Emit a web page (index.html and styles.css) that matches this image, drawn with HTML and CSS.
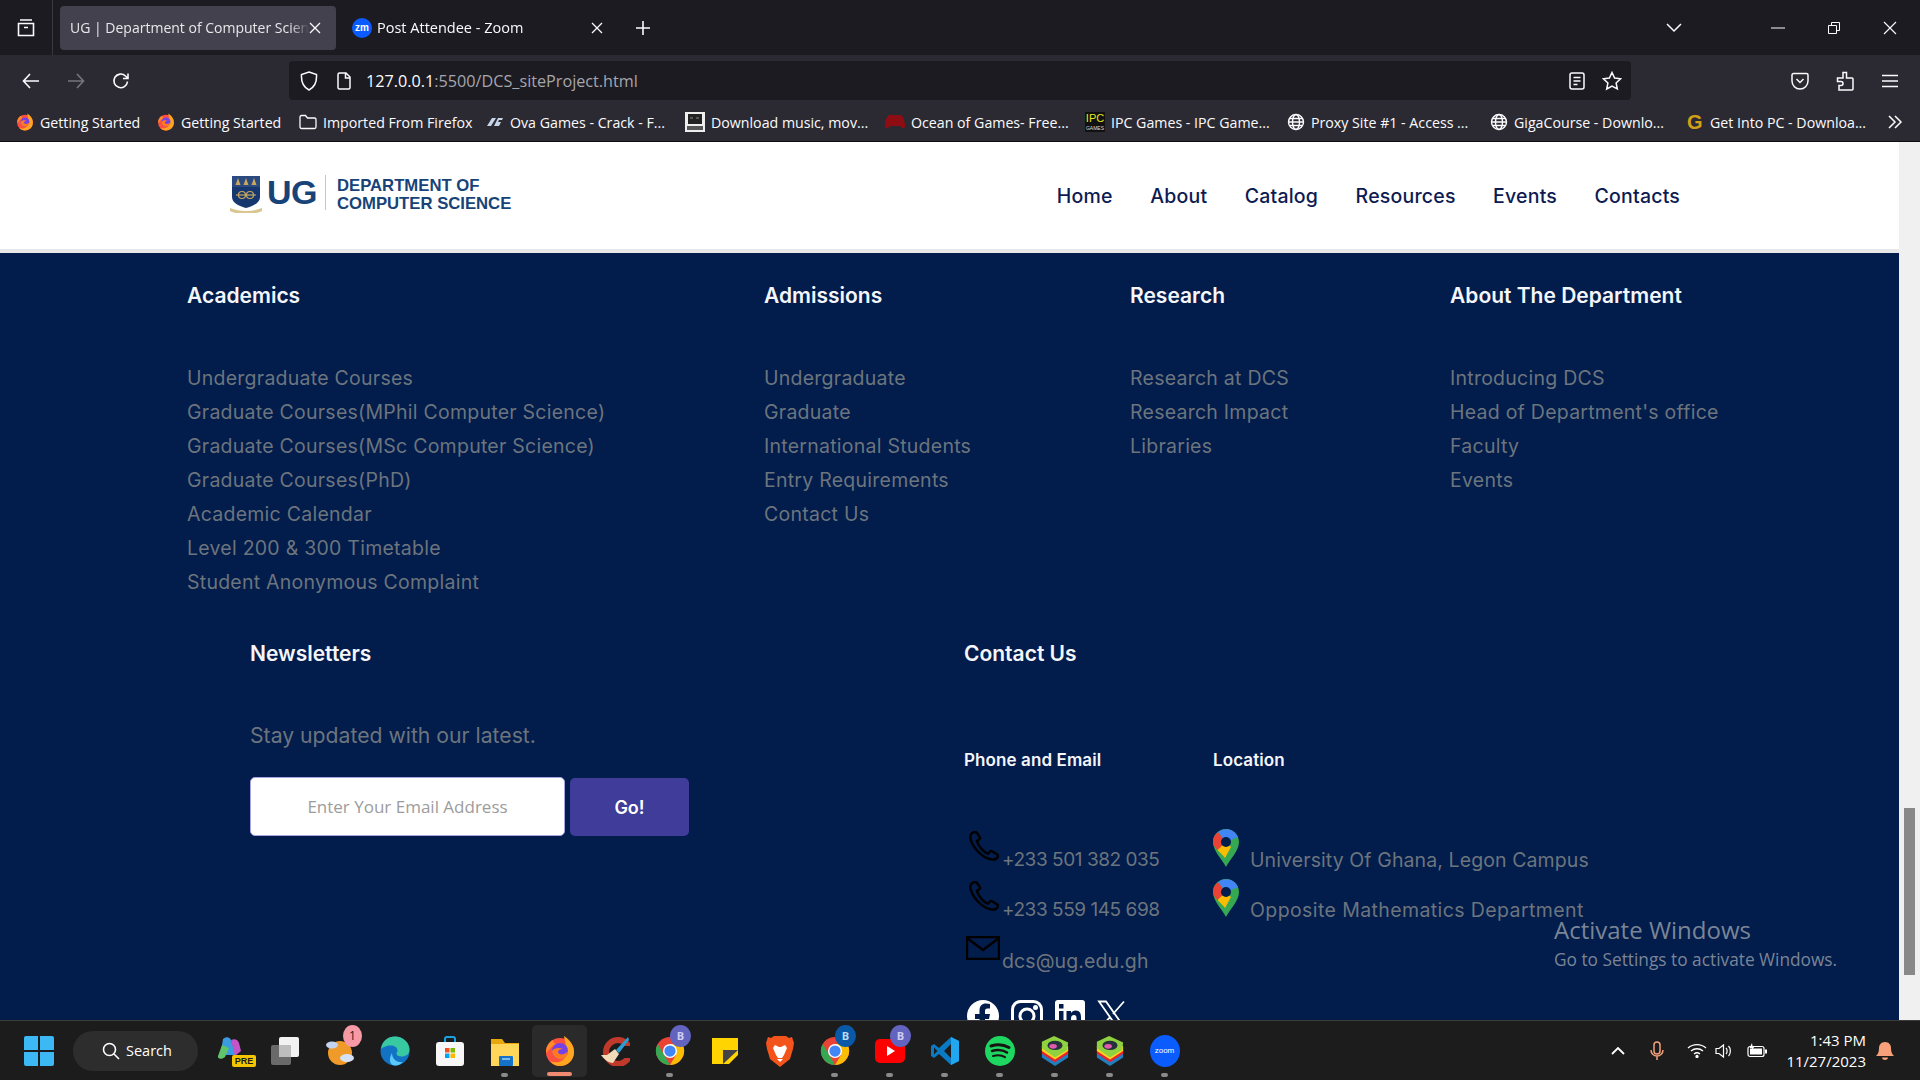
FILE: index.html
```html
<!DOCTYPE html>
<html>
<head>
  <meta charset="UTF-8">
  <title>UG | Department of Computer Science</title>
  <link rel="stylesheet" href="styles.css">
</head>
<body>
  <svg class="defs" width="0" height="0">
    <defs>
      <symbol id="firefox" viewBox="0 0 32 32">
        <circle cx="16" cy="17" r="14" fill="#ff4f3f"/>
        <path d="M20 1c6 4 10 9 10 16 0 8-6 14-14 14-4 0-8-2-10-5 6 3 14 1 16-6 2-6-1-11-2-19z" fill="#ffa51f"/>
        <path d="M2 18C2 11 5 7 9 5c0 2 1 3 3 4-4 2-6 5-10 9z" fill="#ff8a2a"/>
        <circle cx="16" cy="16" r="8" fill="#7542e5"/>
        <path d="M8 16c2-3 7-4 11-2-3 0-5 1-5 3s3 3 6 2c3-1 4-3 4-3 0 5-4 9-9 8-4-1-7-4-7-8z" fill="#ff7a1f"/>
      </symbol>
      <symbol id="globe" viewBox="0 0 18 18">
        <g fill="none" stroke="#fbfbfe" stroke-width="1.400">
          <circle cx="9" cy="9" r="7.500"/>
          <ellipse cx="9" cy="9" rx="3.500" ry="7.500"/>
          <path d="M1.500 9h15M2.500 5.500h13M2.500 12.500h13"/>
        </g>
      </symbol>
      <symbol id="chrome" viewBox="0 0 32 32">
        <circle cx="16" cy="16" r="15" fill="#ea4335"/>
        <path d="M16 31A15 15 0 0 1 3 8.500L9.500 20z" fill="#34a853"/>
        <path d="M16 31a15 15 0 0 0 13-22.500H16l6.500 11.500z" fill="#fbbc04"/>
        <circle cx="16" cy="16" r="7.500" fill="#fff"/>
        <circle cx="16" cy="16" r="6" fill="#4285f4"/>
      </symbol>
      <symbol id="stacks" viewBox="0 0 32 32">
        <path d="M16 10 30 18v5L16 32 2 23v-5z" fill="#1f7fbf"/>
        <path d="M16 7 30 15v4L16 28 2 19v-4z" fill="#e8222f"/>
        <path d="M16 4 30 11v5L16 25 2 16v-5z" fill="#ffd21f"/>
        <path d="M15 0 30 7l-1 8-13 8L2 13V6z" fill="#8fd13f"/>
        <ellipse cx="16" cy="10" rx="8" ry="5" fill="#27313a"/>
        <ellipse cx="14" cy="11" rx="4" ry="2.500" fill="#e05bb0"/>
      </symbol>
      <symbol id="phone" viewBox="0 0 30 30">
        <path d="M4 1.500c-2 1-3 3-2.500 6C3 15 12 27 23 28.500c3 .5 5-1 6-3 .3-1 0-1.500-1-2.200l-5-3c-1-.5-1.700-.3-2.300.4l-1.700 2c-4-1-10-8-11-13l2.300-1.500c.8-.6 1-1.300.6-2.200L8 2c-.7-1-2.500-1.200-4-.5z" fill="none" stroke="#000" stroke-width="2.400"/>
      </symbol>
      <symbol id="mappin" viewBox="0 0 26 38">
        <path d="M13 38C9 30 0 22 0 13A13 13 0 0 1 13 0c7 0 13 6 13 13 0 9-9 17-13 25z" fill="#34a853"/>
        <path d="M1 8A13 13 0 0 1 5 3l8 10-8 9c-3-4-5-6-5-9 0-2 .4-4 1-5z" fill="#ea4335"/>
        <path d="M5 3a13 13 0 0 1 20 5L13 13z" fill="#4285f4"/>
        <path d="M4.500 21 13 13l5 5-6 11c-2-3-5-5-7.500-8z" fill="#fbbc04"/>
        <circle cx="13" cy="13" r="5" fill="#021c4c"/>
      </symbol>
    </defs>
  </svg>

  <div class="tabbar">
    <div class="view-btn">
      <svg width="20" height="20" viewBox="0 0 20 20" fill="none" stroke="#fbfbfe" stroke-width="1.600"><path d="M4 2h12M2.500 5.500h15v12h-15zM8 9.500h4"/></svg>
    </div>
    <div class="tab tab-active">
      <span class="tab-title">UG | Department of Computer Scien</span>
      <svg class="tab-x" width="12" height="12" viewBox="0 0 12 12" stroke="#fbfbfe" stroke-width="1.300"><path d="M1 1l10 10M11 1L1 11"/></svg>
    </div>
    <div class="tab">
      <span class="zm-fav">zm</span>
      <span class="tab-title">Post Attendee - Zoom</span>
      <svg class="tab-x" width="12" height="12" viewBox="0 0 12 12" stroke="#fbfbfe" stroke-width="1.300"><path d="M1 1l10 10M11 1L1 11"/></svg>
    </div>
    <div class="new-tab">
      <svg width="16" height="16" viewBox="0 0 16 16" stroke="#fbfbfe" stroke-width="1.600"><path d="M8 1v14M1 8h14"/></svg>
    </div>
    <div class="tab-list">
      <svg width="16" height="10" viewBox="0 0 16 10" fill="none" stroke="#fbfbfe" stroke-width="1.500"><path d="M1 1l7 7 7-7"/></svg>
    </div>
    <div class="win-btn"><svg width="14" height="2" viewBox="0 0 14 2" stroke="#fbfbfe"><path d="M0 1h14"/></svg></div>
    <div class="win-btn"><svg width="12" height="12" viewBox="0 0 12 12" fill="none" stroke="#fbfbfe"><path d="M.5 3.500h8v8h-8zM3.500 3.500v-3h8v8h-3"/></svg></div>
    <div class="win-btn"><svg width="14" height="14" viewBox="0 0 14 14" stroke="#fbfbfe" stroke-width="1.100"><path d="M1 1l12 12M13 1L1 13"/></svg></div>
  </div>

  <div class="toolbar">
    <div class="tool-btn"><svg width="18" height="16" viewBox="0 0 18 16" fill="none" stroke="#fbfbfe" stroke-width="1.600"><path d="M17 8H2M8 1L1.500 8 8 15"/></svg></div>
    <div class="tool-btn"><svg width="18" height="16" viewBox="0 0 18 16" fill="none" stroke="#77767d" stroke-width="1.600"><path d="M1 8h15M10 1l6.500 7-6.500 7"/></svg></div>
    <div class="tool-btn"><svg width="18" height="18" viewBox="0 0 18 18" fill="none" stroke="#fbfbfe" stroke-width="1.600"><path d="M15.500 9.500A6.800 6.800 0 1 1 13.500 4L16 6.500M16 1.500v5h-5"/></svg></div>
    <div class="urlbar">
      <svg class="url-shield" width="18" height="20" viewBox="0 0 18 20" fill="none" stroke="#fbfbfe" stroke-width="1.500"><path d="M9 1l7.500 2.500C17 11 14 16.500 9 19 4 16.500 1 11 1.500 3.500z"/></svg>
      <svg class="url-page" width="14" height="18" viewBox="0 0 14 18" fill="none" stroke="#fbfbfe" stroke-width="1.500"><path d="M2.500 1H9l4 4v10.500a1.500 1.500 0 0 1-1.500 1.500h-9A1.500 1.500 0 0 1 1 15.500v-13A1.500 1.500 0 0 1 2.500 1zM8.500 1v5h4.500"/></svg>
      <span class="url-text"><span class="url-host">127.0.0.1</span>:5500/DCS_siteProject.html</span>
      <svg class="url-reader" width="16" height="18" viewBox="0 0 16 18" fill="none" stroke="#fbfbfe" stroke-width="1.500"><rect x="1" y="1" width="14" height="16" rx="2"/><path d="M4.500 5.500h7M4.500 9h7M4.500 12.500h4"/></svg>
      <svg class="url-star" width="20" height="20" viewBox="0 0 20 20" fill="none" stroke="#fbfbfe" stroke-width="1.500"><path d="M10 1.500l2.600 5.600 6 .7-4.500 4.100 1.200 6L10 15l-5.300 3 1.200-6L1.400 7.800l6-.7z"/></svg>
    </div>
    <div class="tool-right">
      <div class="tool-btn"><svg width="18" height="18" viewBox="0 0 18 18" fill="none" stroke="#fbfbfe" stroke-width="1.500"><path d="M2.500 1.500h13A1.500 1.500 0 0 1 17 3v6A8 8 0 0 1 1 9V3a1.500 1.500 0 0 1 1.500-1.500zM5.500 7L9 10.500 12.500 7"/></svg></div>
      <div class="tool-btn"><svg width="18" height="20" viewBox="0 0 18 20" fill="none" stroke="#fbfbfe" stroke-width="1.500"><path d="M7 1.500h3.500V7H16a1 1 0 0 1 1 1v10a1 1 0 0 1-1 1H3v-4.500h2a2 2 0 0 0 0-4H1.500V7H7z"/></svg></div>
      <div class="tool-btn"><svg width="16" height="14" viewBox="0 0 16 14" stroke="#fbfbfe" stroke-width="1.500"><path d="M0 1.500h16M0 7h16M0 12.500h16"/></svg></div>
    </div>
  </div>

  <div class="bookmarks">
    <div class="bm"><svg width="18" height="18"><use href="#firefox"/></svg><span>Getting Started</span></div>
    <div class="bm"><svg width="18" height="18"><use href="#firefox"/></svg><span>Getting Started</span></div>
    <div class="bm"><svg width="18" height="16" viewBox="0 0 18 16" fill="none" stroke="#fbfbfe" stroke-width="1.300"><path d="M1 3a1.500 1.500 0 0 1 1.500-1.500h4L8.500 4h7A1.500 1.500 0 0 1 17 5.500V13a1.500 1.500 0 0 1-1.500 1.500h-13A1.500 1.500 0 0 1 1 13z"/></svg><span>Imported From Firefox</span></div>
    <div class="bm"><svg width="18" height="12" viewBox="0 0 18 12"><path d="M1 10L6 2h4L5 10zM8 10l4-8h5l-1 2h-3l-1 2h3l-2 4z" fill="#c8d4e8"/></svg><span>Ova Games - Crack - F...</span></div>
    <div class="bm"><svg width="20" height="20" viewBox="0 0 20 20"><rect width="20" height="20" fill="#eee"/><rect x="3" y="2" width="14" height="10" fill="#222"/><path d="M5 5h3v2H5zM11 5h3v2h-3zM2 14h16v4H2z" fill="#555"/></svg><span>Download music, mov...</span></div>
    <div class="bm"><svg width="20" height="16" viewBox="0 0 20 16"><path d="M5 1h10c3 0 5 6 5 11 0 3-3 3-5 0H5c-2 3-5 3-5 0C0 7 2 1 5 1z" fill="#8e0d12"/></svg><span>Ocean of Games- Free...</span></div>
    <div class="bm"><span class="ipc-fav">IPC<small>GAMES</small></span><span>IPC Games - IPC Game...</span></div>
    <div class="bm"><svg width="18" height="18"><use href="#globe"/></svg><span>Proxy Site #1 - Access ...</span></div>
    <div class="bm"><svg width="18" height="18"><use href="#globe"/></svg><span>GigaCourse - Downlo...</span></div>
    <div class="bm"><span class="g-fav">G</span><span>Get Into PC - Downloa...</span></div>
    <div class="bm-more"><svg width="16" height="14" viewBox="0 0 16 14" fill="none" stroke="#fbfbfe" stroke-width="1.500"><path d="M2 1l6 6-6 6M8 1l6 6-6 6"/></svg></div>
  </div>

  <div class="viewport">
    <div class="page">
      <header class="site-header">
        <div class="logo">
          <svg class="crest" width="32" height="38" viewBox="0 0 32 38">
            <path d="M2 1h28v21c0 6-7 9-14 11C9 31 2 28 2 22z" fill="#17386f"/>
            <path d="M2 1h28v11H2z" fill="#2a4a80"/>
            <path d="M8 3l2.500 7h-5zM16 3l2.500 7h-5zM24 3l2.500 7h-5z" fill="#c9a75d"/>
            <g fill="none" stroke="#c9a75d" stroke-width="1.200"><circle cx="12" cy="20" r="3.500"/><circle cx="20" cy="20" r="3.500"/><path d="M6 20h20"/></g>
            <path d="M0 33c5 2 10 3 16 3s11-1 16-3v3c-5 3-10 2-16 2S5 39 0 36z" fill="#d9c690"/>
          </svg>
          <span class="logo-ug">UG</span>
          <span class="logo-dept">DEPARTMENT OF<br>COMPUTER SCIENCE</span>
        </div>
        <nav class="site-nav">
          <a>Home</a>
          <a>About</a>
          <a>Catalog</a>
          <a>Resources</a>
          <a>Events</a>
          <a>Contacts</a>
        </nav>
      </header>

      <footer class="site-footer">
        <div class="link-cols">
          <div>
            <h3>Academics</h3>
            <ul>
              <li>Undergraduate Courses</li>
              <li>Graduate Courses(MPhil Computer Science)</li>
              <li>Graduate Courses(MSc Computer Science)</li>
              <li>Graduate Courses(PhD)</li>
              <li>Academic Calendar</li>
              <li>Level 200 &amp; 300 Timetable</li>
              <li>Student Anonymous Complaint</li>
            </ul>
          </div>
          <div>
            <h3>Admissions</h3>
            <ul>
              <li>Undergraduate</li>
              <li>Graduate</li>
              <li>International Students</li>
              <li>Entry Requirements</li>
              <li>Contact Us</li>
            </ul>
          </div>
          <div>
            <h3>Research</h3>
            <ul>
              <li>Research at DCS</li>
              <li>Research Impact</li>
              <li>Libraries</li>
            </ul>
          </div>
          <div>
            <h3>About The Department</h3>
            <ul>
              <li>Introducing DCS</li>
              <li>Head of Department's office</li>
              <li>Faculty</li>
              <li>Events</li>
            </ul>
          </div>
        </div>

        <div class="lower">
          <div>
            <h3>Newsletters</h3>
            <p class="news-text">Stay updated with our latest.</p>
            <form class="news-form">
              <input type="email" placeholder="Enter Your Email Address">
              <button type="button">Go!</button>
            </form>
          </div>
          <div>
            <h3>Contact Us</h3>
            <div class="contact-cols">
              <div>
                <h4>Phone and Email</h4>
                <div class="contact-row"><svg class="c-icon" width="34" height="30"><use href="#phone" width="30" height="30" x="3"/></svg><span class="phone-num">+233 501 382 035</span></div>
                <div class="contact-row"><svg class="c-icon" width="34" height="30"><use href="#phone" width="30" height="30" x="3"/></svg><span class="phone-num">+233 559 145 698</span></div>
                <div class="contact-row contact-mail"><svg class="c-icon" width="34" height="24" viewBox="0 0 34 24" fill="none" stroke="#000" stroke-width="2.400"><path d="M1 1h32v22H1zM1 2l16 12L33 2"/></svg><span>dcs@ug.edu.gh</span></div>
                <div class="socials">
                  <svg width="32" height="32" viewBox="0 0 32 32"><circle cx="16" cy="16" r="16" fill="#fff"/><path d="M18 32V19h4l1-5h-5v-3c0-1.500.7-2.500 2.500-2.500H23V4c-1-.2-2.500-.4-4-.4-4 0-6.500 2.500-6.500 7V14H8v5h4.500v13z" fill="#021c4c"/></svg>
                  <svg width="32" height="32" viewBox="0 0 32 32" fill="none" stroke="#fff" stroke-width="3"><rect x="1.500" y="1.500" width="29" height="29" rx="8"/><circle cx="16" cy="16" r="7"/><circle cx="24.500" cy="7.500" r="1" fill="#fff"/></svg>
                  <svg width="30" height="30" viewBox="0 0 30 30"><rect width="30" height="30" rx="3" fill="#fff"/><path d="M4 11h4.500v15H4zM4 4h4.500v4.500H4zM11.500 11H16v2c1-1.500 2.500-2.500 4.500-2.500 4.500 0 5.500 3 5.500 7V26h-4.500v-7.500c0-2-.5-3.500-2.500-3.500s-3 1.500-3 3.500V26h-4.500z" fill="#021c4c"/></svg>
                  <svg width="30" height="30" viewBox="0 0 30 30" fill="none" stroke="#fff" stroke-width="1.800"><path d="M2 1.500h7l19 27h-7zM27 1.500L16 14M3 28.500L13 17"/></svg>
                </div>
              </div>
              <div>
                <h4>Location</h4>
                <div class="contact-row"><svg class="c-pin" width="26" height="38"><use href="#mappin"/></svg><span>University Of Ghana, Legon Campus</span></div>
                <div class="contact-row"><svg class="c-pin" width="26" height="38"><use href="#mappin"/></svg><span class="loc-wide">Opposite Mathematics Department</span></div>
              </div>
            </div>
          </div>
        </div>
      </footer>

      <div class="activate">
        <div class="activate-title">Activate Windows</div>
        <div class="activate-sub">Go to Settings to activate Windows.</div>
      </div>
    </div>
    <div class="scrollbar"><div class="thumb"></div></div>
  </div>

  <div class="taskbar">
    <div class="task-icon">
      <svg width="30" height="30" viewBox="0 0 30 30"><path d="M0 2a2 2 0 0 1 2-2h12v14H0zM16 0h12a2 2 0 0 1 2 2v12H16zM0 16h14v14H2a2 2 0 0 1-2-2zM16 16h14v12a2 2 0 0 1-2 2H16z" fill="#3cb8f5"/></svg>
    </div>
    <div class="search-pill">
      <svg width="18" height="18" viewBox="0 0 18 18" fill="none" stroke="#fff" stroke-width="1.600"><circle cx="7.500" cy="7.500" r="6"/><path d="M12 12l5 5"/></svg>
      <span>Search</span>
    </div>
    <div class="task-icon">
      <svg width="30" height="30" viewBox="0 0 30 30"><path d="M8 3c3-3 7-2 8 1l5 15H10L7 9z" fill="#3a9be0"/><path d="M16 4c4-2 7 0 8 3l2 8-6 5z" fill="#c455c8"/><path d="M7 9 3 20c-1 3 4 4 7 1l4-9z" fill="#5fc46a"/></svg>
      <span class="pre-tag">PRE</span>
    </div>
    <div class="task-icon">
      <svg width="30" height="30" viewBox="0 0 30 30"><rect x="9" y="1" width="20" height="20" rx="2" fill="#f2f2f2"/><rect x="1" y="9" width="20" height="20" rx="2" fill="#6a6a6a"/><rect x="9" y="9" width="12" height="12" fill="#bdbdbd"/></svg>
    </div>
    <div class="task-icon">
      <svg width="30" height="30" viewBox="0 0 30 30"><circle cx="15" cy="17" r="12" fill="#f09a2a"/><ellipse cx="7" cy="9" rx="6" ry="3.500" fill="#c4d4f0"/><ellipse cx="22" cy="22" rx="7" ry="4" fill="#d4e2f8"/></svg>
      <span class="badge badge-pink">1</span>
    </div>
    <div class="task-icon">
      <svg width="30" height="30" viewBox="0 0 30 30"><circle cx="15" cy="15" r="14.500" fill="#1273c4"/><path d="M1 13C2 5 8 .5 15 .5c8 0 14.500 6 14.500 13 0 5-4 7-8 7-3 0-5-1-5-3 0-1 1-1.500 1-3 0-3-3-5-7-5-4 0-8 2-9.500 3.500z" fill="#38c9a0"/><path d="M12 17c0 6 5 10 11 9-3 3-6 3.500-8 3.500-5 0-7-6-3-12.500z" fill="#5ac8fa"/></svg>
    </div>
    <div class="task-icon">
      <svg width="30" height="30" viewBox="0 0 30 30"><path d="M10 8V3a2 2 0 0 1 2-2h6a2 2 0 0 1 2 2v5" fill="none" stroke="#1ba1e2" stroke-width="2"/><rect x="1" y="6" width="28" height="24" rx="3" fill="#f7f7f7"/><path d="M10 12h4.500v4.500H10z" fill="#f25022"/><path d="M15.500 12H20v4.500h-4.500z" fill="#7fba00"/><path d="M10 17.500h4.500V22H10z" fill="#00a4ef"/><path d="M15.500 17.500H20V22h-4.500z" fill="#ffb900"/></svg>
    </div>
    <div class="task-icon has-dot">
      <svg width="30" height="30" viewBox="0 0 30 30"><path d="M1 3h11l3 4h14v23H1z" fill="#e8a80c"/><rect x="1" y="8" width="28" height="22" fill="#ffd659"/><rect x="9" y="20" width="14" height="10" rx="1" fill="#1473c9"/><path d="M12 23h8" stroke="#9fd0f5" stroke-width="1.500"/></svg>
    </div>
    <div class="task-icon task-active">
      <svg width="32" height="32"><use href="#firefox"/></svg>
    </div>
    <div class="task-icon">
      <svg width="30" height="30" viewBox="0 0 30 30"><circle cx="18" cy="16" r="12" fill="none" stroke="#c0392b" stroke-width="6"/><rect x="18" y="10" width="12" height="12" fill="#1c1c1c"/><path d="M28 1 16 14l3 3L29 4z" fill="#2a9fd6"/><path d="M15 13 7 19l-6 0c3 4 7 8 12 8l6-9z" fill="#f0dcb8"/></svg>
    </div>
    <div class="task-icon has-dot">
      <svg width="30" height="30"><use href="#chrome"/></svg>
      <span class="badge badge-b">B</span>
    </div>
    <div class="task-icon">
      <svg width="28" height="30" viewBox="0 0 28 30"><path d="M1 2h26v17l-9 9H1z" fill="#ffd400"/><path d="M12 28V14h15z" fill="#444"/></svg>
    </div>
    <div class="task-icon">
      <svg width="28" height="32" viewBox="0 0 28 32"><path d="M8 1h12l3 2 3-1 2 6-1 6-3 10-10 8-10-8L1 14 0 8l2-6 3 1z" fill="#f2541b"/><path d="M9 10l4 2h2l4-2 2 3-3 7-2 3h-4l-2-3-3-7z" fill="#fff"/><path d="M11 24h6l-3 3z" fill="#fff"/></svg>
    </div>
    <div class="task-icon has-dot">
      <svg width="30" height="30"><use href="#chrome"/></svg>
      <span class="badge badge-b badge-dark">B</span>
    </div>
    <div class="task-icon has-dot">
      <svg width="30" height="24" viewBox="0 0 30 24"><rect width="30" height="24" rx="5" fill="#f00"/><path d="M12 7l8 5-8 5z" fill="#fff"/></svg>
      <span class="badge badge-b">B</span>
    </div>
    <div class="task-icon has-dot">
      <svg width="30" height="30" viewBox="0 0 30 30"><path d="M21 1l8 4v20l-8 4L9 18l-5 4-3-2v-10l3-2 5 4z" fill="#0a7ac4"/><path d="M21 1l8 4v20l-8 4z" fill="#23a6f0"/><path d="M21 8l-7 7 7 7z" fill="#1c1c1c"/><path d="M4 11.500v7L7.500 15z" fill="#1c1c1c"/></svg>
    </div>
    <div class="task-icon has-dot">
      <svg width="30" height="30" viewBox="0 0 30 30"><circle cx="15" cy="15" r="15" fill="#1ed760"/><g fill="none" stroke="#191414" stroke-linecap="round"><path d="M6 10c6-2 13-1.500 18 1.500" stroke-width="3"/><path d="M7 15c5-1.500 11-1 15 1.500" stroke-width="2.500"/><path d="M8 20c4-1 9-.8 12 1.200" stroke-width="2"/></g></svg>
    </div>
    <div class="task-icon has-dot"><svg width="30" height="32"><use href="#stacks"/></svg></div>
    <div class="task-icon has-dot"><svg width="30" height="32"><use href="#stacks"/></svg></div>
    <div class="task-icon has-dot">
      <span class="zoom-app">zoom</span>
    </div>

    <div class="tray">
      <svg class="tray-up" width="14" height="8" viewBox="0 0 14 8" fill="none" stroke="#fff" stroke-width="1.800"><path d="M1 7l6-6 6 6"/></svg>
      <svg class="tray-mic" width="14" height="20" viewBox="0 0 14 20" fill="none" stroke="#f2a07a" stroke-width="1.500"><rect x="4" y="1" width="6" height="12" rx="3"/><path d="M1 9a6 6 0 0 0 12 0M7 15v4"/></svg>
      <svg class="tray-wifi" width="20" height="15" viewBox="0 0 20 15" fill="none" stroke="#fff" stroke-width="1.300"><path d="M1 5c5-4.500 13-4.500 18 0M4 8c3.500-3 8.500-3 12 0M7 11c1.800-1.500 4.200-1.500 6 0"/><circle cx="10" cy="13.500" r="1" fill="#fff"/></svg>
      <svg class="tray-vol" width="20" height="16" viewBox="0 0 20 16" fill="none" stroke="#fff" stroke-width="1.200"><path d="M1 5.500h3L8.500 2v12L4 10.500H1zM11 5c1.500 1.500 1.500 4.500 0 6M13.500 3c2.500 2.500 2.500 7.500 0 10"/></svg>
      <svg class="tray-bat" width="20" height="16" viewBox="0 0 20 16"><rect x="1" y="3.500" width="16" height="10" rx="2" fill="none" stroke="#fff" stroke-width="1.200"/><rect x="3" y="5.500" width="12" height="6" fill="#fff"/><rect x="18" y="6.500" width="2" height="4" fill="#fff"/><path d="M5 0L2.500 5H5L4 8l4-5H5.500z" fill="#fff"/></svg>
      <div class="clock"><div>1:43 PM</div><div>11/27/2023</div></div>
      <svg class="tray-bell" width="18" height="20" viewBox="0 0 18 20"><path d="M9 1c4 0 6 3 6 6 0 4 1 6 3 8H0c2-2 3-4 3-8 0-3 2-6 6-6zM6 16.500h6c0 1.500-1.300 2.500-3 2.500s-3-1-3-2.500z" fill="#f7a07a"/></svg>
    </div>
  </div>
</body>
</html>
```

FILE: styles.css
```css
* { box-sizing: border-box; }
html, body { margin: 0; height: 100%; overflow: hidden; }
body { width: 1920px; height: 1080px; display: flex; flex-direction: column; font-family: Inter, "Noto Sans", sans-serif; background: #1c1b22; }
.defs { position: absolute; }
h3, h4, ul, p { margin: 0; padding: 0; }
ul { list-style: none; }

/* browser chrome */
.tabbar { height: 55px; flex: none; display: flex; align-items: center; background: #1c1b22; color: #fbfbfe; font: 14.5px "Open Sans", sans-serif; }
.view-btn { width: 53px; height: 55px; flex: none; display: flex; align-items: center; justify-content: center; border-right: 1px solid #3a3940; }
.tab { width: 276px; height: 44px; flex: none; margin-left: 7px; padding: 0 15px 0 10px; border-radius: 4px; display: flex; align-items: center; }
.tab + .tab { margin-left: 6px; }
.tab-active { background: #42414d; }
.tab-title { flex: 1; min-width: 0; white-space: nowrap; -webkit-mask-image: linear-gradient(90deg, #000 92%, transparent); mask-image: linear-gradient(90deg, #000 92%, transparent); }
.tab-active .tab-title { color: #e8e8ea; font-size: 14px; }
.tab-x { flex: none; }
.zm-fav { flex: none; width: 20px; height: 20px; margin-right: 5px; border-radius: 50%; background: #0b5cff; color: #fff; font: bold 10px/20px "Liberation Sans", sans-serif; text-align: center; }
.new-tab { width: 50px; flex: none; display: flex; justify-content: center; }
.tab-list { margin-left: 998px; width: 16px; flex: none; display: flex; }
.tab-list + .win-btn { margin-left: 68px; }
.win-btn { width: 56px; flex: none; display: flex; justify-content: center; align-items: center; }

.toolbar { height: 51px; flex: none; padding: 6px 8px 6px 8px; display: flex; align-items: center; background: #2b2a33; }
.tool-btn { width: 45px; display: flex; justify-content: center; align-items: center; }
.urlbar { width: 1342px; height: 39px; margin-left: 146px; padding: 0 9px 0 11px; border-radius: 4px; background: #1c1b22; display: flex; align-items: center; color: #a6a6ac; font: 16.2px "Open Sans", sans-serif; }
.url-page { margin-left: 19px; }
.url-text { margin-left: 15px; padding-top: 1px; flex: 1; }
.url-host { color: #fbfbfe; }
.url-star { margin-left: 17px; }
.tool-right { margin-left: auto; display: flex; }

.bookmarks { height: 35px; flex: none; background: #2b2a33; display: grid; grid-template-columns: 141px 142px 187px 199px 200px 200px 202px 203px 197px 200px 1fr; padding-left: 16px; padding-bottom: 3px; color: #fbfbfe; font: 14.2px "Open Sans", sans-serif; align-items: center; }
.bm { display: flex; align-items: center; gap: 6px; white-space: nowrap; }
.bm-more { display: flex; }
.ipc-fav { width: 20px; height: 20px; background: #111; color: #e6e61a; font: 11px/13px "Liberation Sans Narrow", "Liberation Sans", sans-serif; text-align: center; display: block; overflow: hidden; }
.ipc-fav small { display: block; font-size: 5px; line-height: 6px; color: #ddd; }
.g-fav { width: 17px; color: #d4a017; font: bold 20px/20px "Liberation Sans", sans-serif; }

/* page */
.viewport { flex: 1; min-height: 0; display: flex; border-top: 1px solid #0c0c10; }
.page { flex: 1; min-width: 0; position: relative; overflow: hidden; background: #021c4c; }
.scrollbar { width: 21px; background: #f0f0f0; padding: 666px 5px 0 5px; }
.thumb { height: 167px; background: #888; }

.site-header { height: 111px; padding: 0 219px 0 230px; background: #fff; border-bottom: 4px solid #e8e8e8; display: flex; align-items: center; justify-content: space-between; }
.logo { display: flex; align-items: center; margin-bottom: 6px; color: #174378; font-family: "Liberation Sans", sans-serif; font-weight: bold; }
.crest { margin-top: 3px; }
.logo-ug { margin-left: 5px; padding-right: 8px; border-right: 1px solid #d8c49a; font-size: 34px; line-height: 35px; letter-spacing: -.5px; }
.logo-dept { margin: 4px 0 0 11px; font-size: 16.7px; line-height: 18px; }
.site-nav { display: flex; gap: 37.5px; }
.site-nav a { color: #0d1b52; font-size: 19.5px; font-weight: 500; letter-spacing: .2px; }

.site-footer { color: #6c757d; font-size: 19.5px; letter-spacing: .25px; line-height: 34px; }
.site-footer h3 { color: #f4f6fa; font-size: 21px; font-weight: 600; line-height: 30px; letter-spacing: 0; }
.link-cols { padding: 28px 0 0 187px; display: grid; grid-template-columns: 577px 366px 320px 1fr; }
.link-cols h3 { margin-bottom: 50px; }

.lower { margin-top: 40px; padding-left: 250px; display: grid; grid-template-columns: 714px 1fr; }
.news-text { margin: 51px 0 27px; font-size: 21.2px; line-height: 30px; letter-spacing: 0; }
.news-form { display: flex; gap: 5px; }
.news-form input { width: 315px; height: 59px; border: 1px solid #a9a4e0; border-radius: 5px; background: #fff; text-align: center; font: 17px "Open Sans", sans-serif; }
.news-form input::placeholder { color: #9c9c9c; opacity: 1; }
.news-form button { width: 119px; height: 58px; margin-top: 1px; border: 0; border-radius: 5px; background: #3f3d99; color: #fff; font: 600 18px Inter, sans-serif; }

.contact-cols { margin-top: 78px; display: grid; grid-template-columns: 249px 1fr; }
.contact-cols h4 { height: 26px; margin-bottom: 57px; color: #f4f6fa; font-size: 17px; font-weight: 600; line-height: 26px; letter-spacing: .1px; }
.contact-row { height: 50px; display: flex; line-height: 30px; letter-spacing: .1px; white-space: nowrap; }
.contact-row span { margin-top: 15px; }
.phone-num { font-size: 19px; letter-spacing: -.45px; }
.loc-wide { letter-spacing: .4px; }
.c-icon { flex: none; margin: 1px 2px 0 2px; }
.contact-mail { margin-top: 1px; }
.contact-mail .c-icon { margin-top: 5px; }
.c-pin { flex: none; margin: -1px 11px 0 0; }
.socials { margin: 19px 0 0 3px; display: flex; gap: 12px; }

.activate { position: absolute; left: 1554px; top: 772px; color: #7a8596; font-family: "Open Sans", sans-serif; }
.activate-title { font-size: 24px; line-height: 32px; }
.activate-sub { margin-top: 2px; font-size: 17.3px; line-height: 24px; }

/* taskbar */
.taskbar { height: 60px; flex: none; padding-left: 11px; display: flex; align-items: center; background: #1c1c1c; border-top: 1px solid #3b3b3b; color: #fff; }
.task-icon { width: 55px; height: 52px; flex: none; position: relative; display: flex; align-items: center; justify-content: center; }
.has-dot::after { content: ""; position: absolute; left: 24px; bottom: 0; width: 7px; height: 4px; border-radius: 2px; background: #8a8a8a; }
.task-active { background: #2a2a2a; border-radius: 5px; }
.task-active::after { content: ""; position: absolute; left: 15px; bottom: 1px; width: 25px; height: 4px; border-radius: 2px; background: #f08a70; }
.search-pill { width: 125px; height: 40px; margin: 0 4px 0 7px; padding-left: 31px; display: flex; align-items: center; gap: 6px; flex: none; border-radius: 20px; background: #2d2d2d; font: 14.5px "Open Sans", sans-serif; }
.search-pill svg { margin-left: -2px; }
.badge { position: absolute; top: 0; right: 5px; width: 19px; height: 22px; border-radius: 50%; background: #f79aa5; color: #222; font: 12px/22px "Open Sans", sans-serif; text-align: center; }
.badge-b { top: 0; right: 6px; width: 21px; height: 22px; background: #6264c0; color: #cfd0f2; font-weight: bold; font-size: 11px; }
.badge-dark { background: #0a58a8; color: #bcd8f4; }
.pre-tag { position: absolute; left: 30px; top: 30px; width: 24px; height: 12px; border-radius: 2px; background: #f5c400; color: #1c1c1c; font: bold 9px/12px "Liberation Sans", sans-serif; text-align: center; }
.zoom-app { width: 30px; height: 32px; border-radius: 50% / 50%; background: #0b5cff; color: #fff; font: 8px/32px "Liberation Sans", sans-serif; text-align: center; }

.tray { flex: 1; position: relative; display: flex; align-items: center; }
.tray-up { margin-left: 419px; }
.tray-mic { margin-left: 25px; }
.tray-wifi { margin-left: 23px; }
.tray-vol { margin-left: 8px; }
.tray-bat { margin-left: 12px; }
.clock { width: 98px; margin-left: 1px; font: 15px/21px "Open Sans", sans-serif; text-align: right; }
.tray-bell { margin-left: 10px; }
```
